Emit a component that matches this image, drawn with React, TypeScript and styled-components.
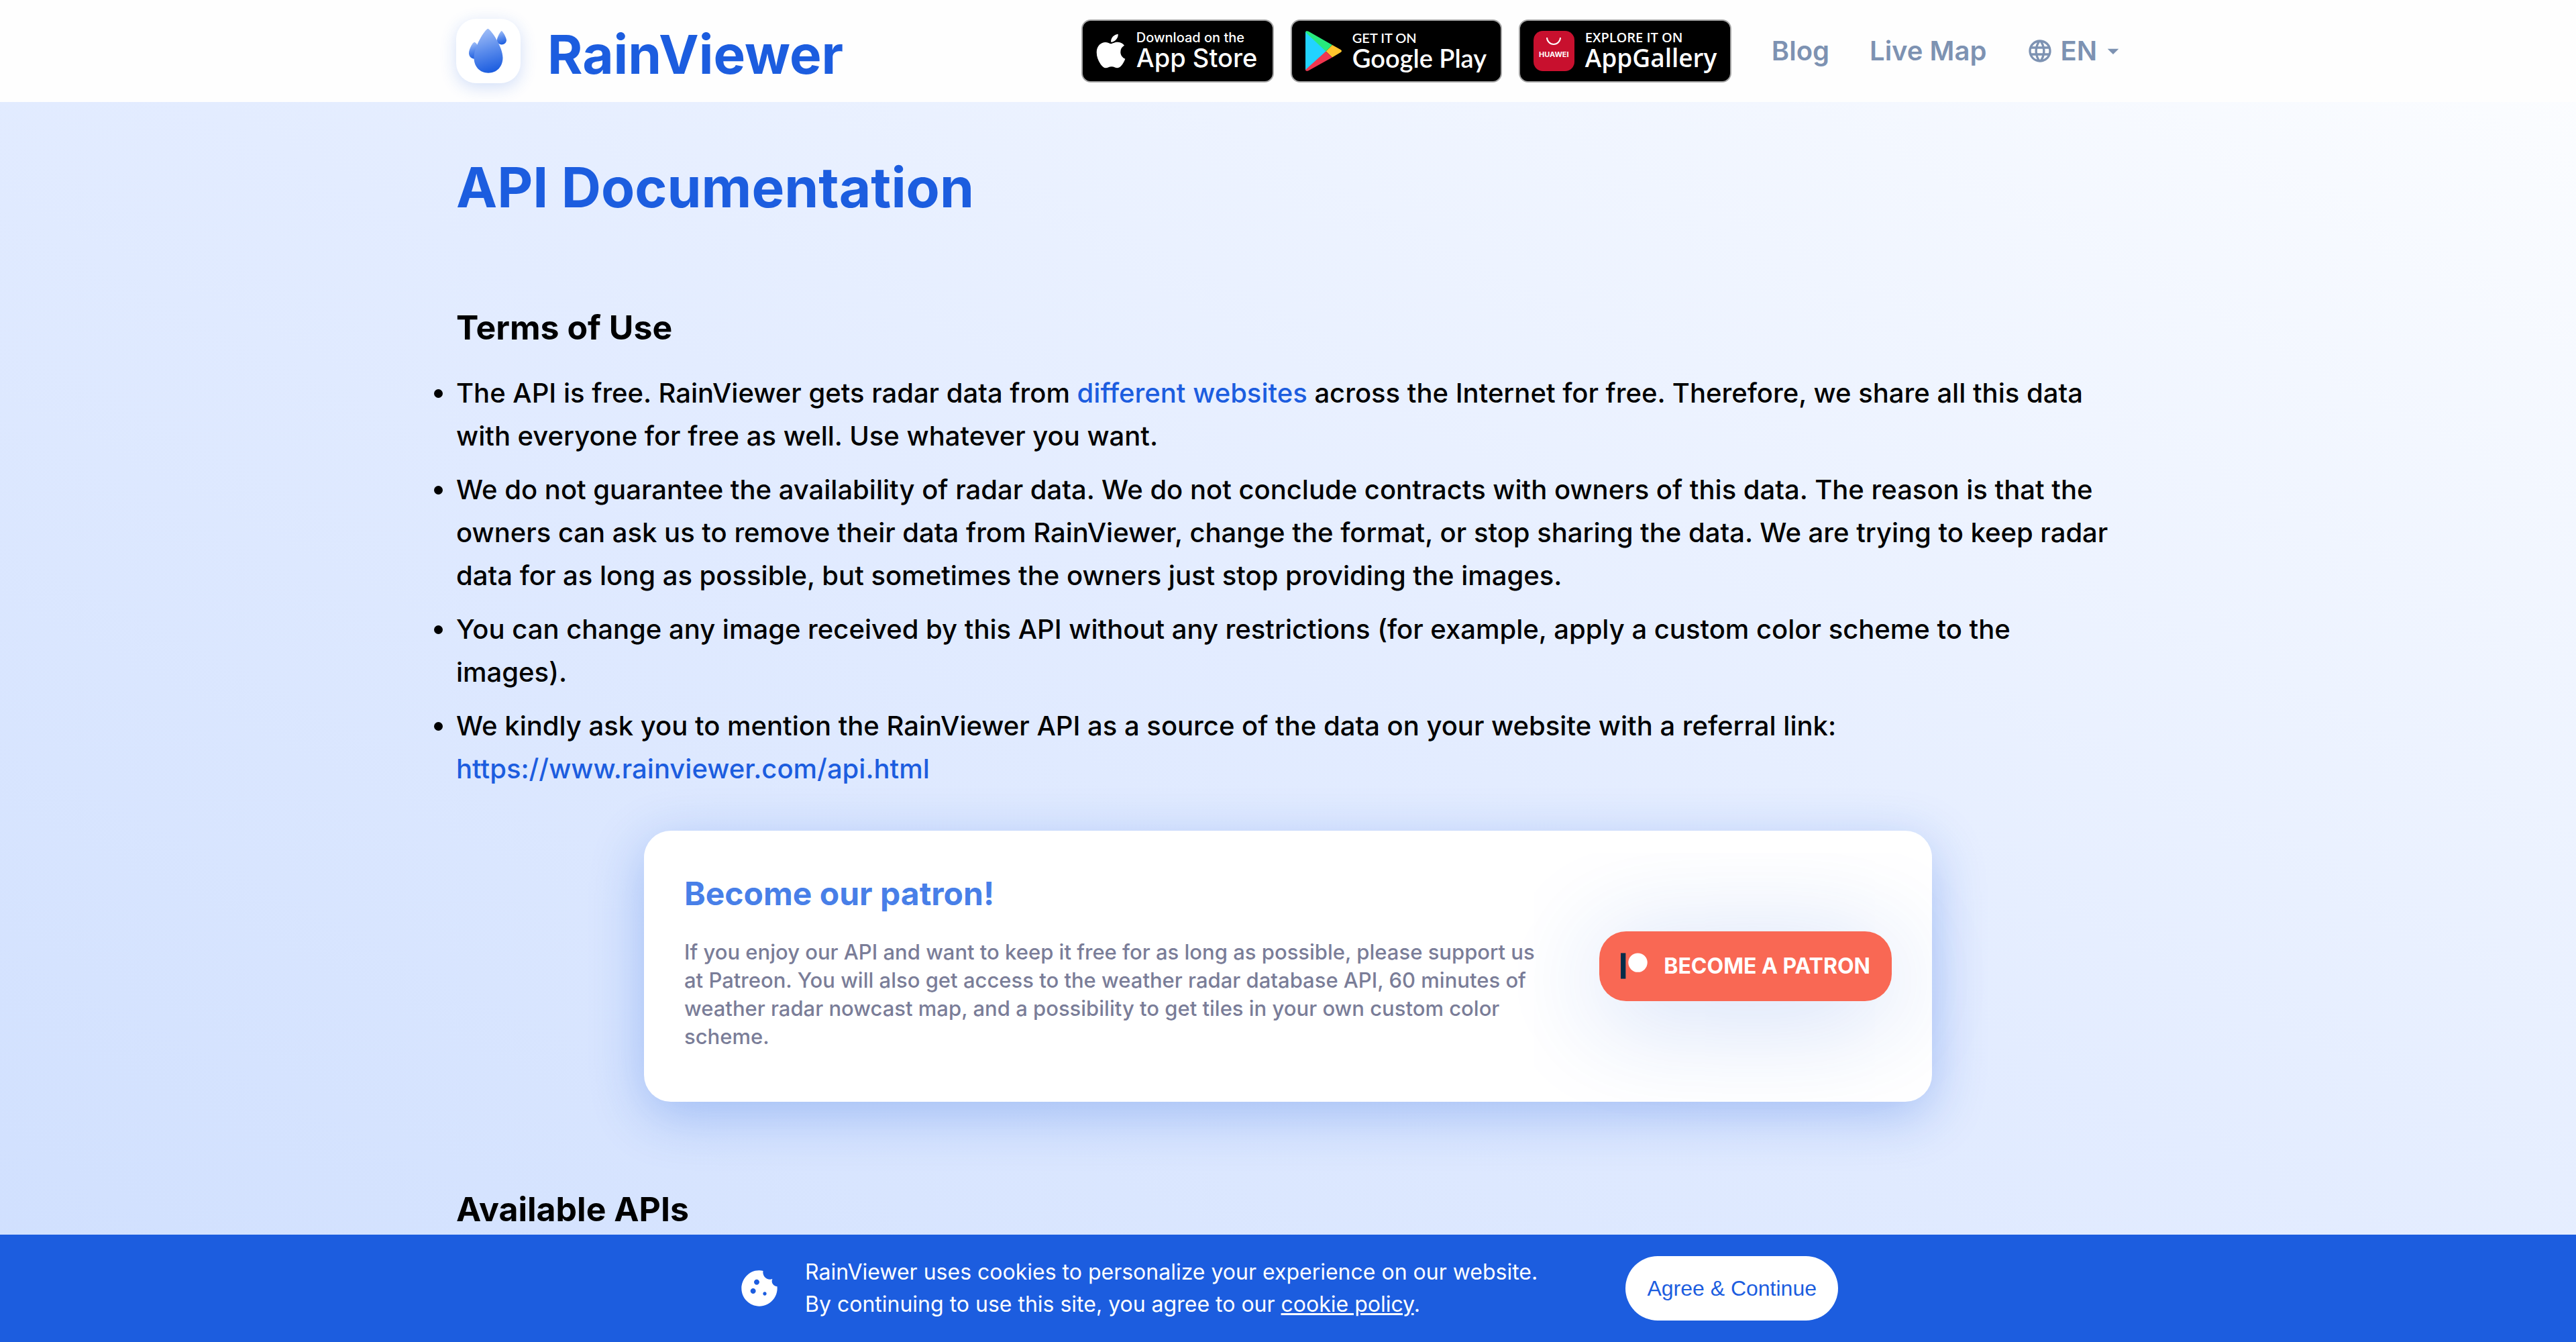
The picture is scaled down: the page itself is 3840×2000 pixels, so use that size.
import React from "react";
import styled, { createGlobalStyle } from "styled-components";
import { FaApple } from "react-icons/fa";
import { MdCookie, MdLanguage, MdArrowDropDown } from "react-icons/md";

const blue = "#1c5ddf";
const slate = "#7d92b2";
const sans = `Inter, "Liberation Sans", sans-serif`;

const Global = createGlobalStyle`
  *, *::before, *::after { box-sizing: border-box; }
  html, body { margin: 0; }
  body {
    min-height: 100vh;
    font: 500 40px/64px ${sans};
    color: #000;
    background: linear-gradient(to top right, #cfdffe 0%, #e3ecff 50%, #fdfeff 100%) fixed;
  }
  h1, h2, h3, p, ul { margin: 0; padding: 0; }
  a { color: ${blue}; text-decoration: none; }
  button { cursor: pointer; }
`;

const Page = styled.div`
  height: 100vh;
  overflow: hidden;
  display: flex;
  flex-direction: column;
`;

const Header = styled.header`
  background: #fefefe;
  flex: none;
`;

const Container = styled.div`
  width: 100%;
  max-width: 2560px;
  margin: 0 auto;
  padding: 0 40px;
`;

const HeaderRow = styled(Container)`
  height: 152px;
  display: flex;
  align-items: center;
  justify-content: space-between;
`;

const Brand = styled.a`
  height: 96px;
  display: flex;
  align-items: flex-start;
  gap: 40px;
`;

const BrandName = styled.span`
  font-size: 80px;
  line-height: 106px;
  font-weight: 700;
`;

const LogoTile = styled.span`
  width: 96px;
  height: 96px;
  border-radius: 30px;
  background: #fff;
  box-shadow: 0 6px 24px rgba(28, 93, 223, 0.2);
  svg { display: block; }
`;

const Nav = styled.nav`
  display: flex;
  align-items: center;
  gap: 60px;
`;

const Badges = styled.div`
  display: flex;
  align-items: center;
  gap: 25px;
`;

const Badge = styled.a<{ $width: number; $family: string; $weight: number }>`
  width: ${(p) => p.$width}px;
  height: 94px;
  padding: 0 20px;
  display: flex;
  align-items: center;
  gap: 16px;
  border: 2px solid #a6a6a6;
  border-radius: 14px;
  background: #000;
  color: #fff;
  font-family: ${(p) => p.$family};
  font-weight: ${(p) => p.$weight};
  white-space: nowrap;
  svg { flex: none; }
`;

const AppleLogo = styled(FaApple)`
  width: 44px;
  height: 58px;
`;

const BadgeText = styled.span`
  display: flex;
  flex-direction: column;
`;

const Small = styled.span`
  font-size: 20px;
  line-height: 20px;
`;

const Large = styled.span<{ $size: number }>`
  font-size: ${(p) => p.$size}px;
  line-height: 40px;
`;

const HuaweiIcon = styled.span`
  width: 61px;
  height: 60px;
  display: flex;
  flex: none;
  flex-direction: column;
  align-items: center;
  gap: 4px;
  padding-top: 9px;
  border-radius: 14px;
  background: #c8102e;
  font: 700 11px/20px ${sans};
`;

const NavLink = styled.a`
  color: ${slate};
  font-weight: 600;
`;

const LangButton = styled.button`
  display: flex;
  align-items: center;
  border: 0;
  padding: 0;
  margin-right: -10px;
  background: none;
  font: inherit;
  font-weight: 600;
  color: ${slate};
`;

const LangCode = styled.span`
  padding: 0 4px 0 10px;
`;

const Main = styled(Container)`
  flex: 1;
`;

const Title = styled.h1`
  padding-top: 80px;
  font-size: 82px;
  line-height: 96px;
  font-weight: 700;
  color: ${blue};
`;

const Heading = styled.h2`
  padding-top: 128px;
  font-size: 50px;
  line-height: 64px;
  font-weight: 700;
`;

const List = styled.ul`
  padding-top: 34px;
  display: flex;
  flex-direction: column;
  gap: 16px;
`;

const Patron = styled.section`
  max-width: 1920px;
  margin: 60px auto 0;
  padding: 60px;
  display: flex;
  align-items: center;
  gap: 80px;
  border-radius: 40px;
  background: #fff;
  box-shadow: 0 20px 80px rgba(28, 93, 223, 0.3);
`;

const PatronTitle = styled.h3`
  font-size: 48px;
  line-height: 68px;
  font-weight: 700;
  color: #487fe8;
`;

const PatronText = styled.p`
  padding: 32px 0 16px;
  font-size: 31px;
  line-height: 42px;
  color: #7a7d98;
`;

const PatronButton = styled.button`
  flex: none;
  width: 436px;
  height: 104px;
  padding: 0 32px;
  display: flex;
  align-items: center;
  gap: 24px;
  border: 0;
  border-radius: 40px;
  background: #f96854;
  box-shadow: 0 20px 160px rgba(28, 93, 223, 0.24);
  color: #fff;
  font: 700 32px/40px ${sans};
  white-space: nowrap;
`;

const CookieBar = styled.footer`
  height: 160px;
  flex: none;
  display: flex;
  justify-content: center;
  background: ${blue};
  color: #fff;
`;

const CookieRow = styled.div`
  width: 100%;
  max-width: 1640px;
  display: flex;
  align-items: center;
  gap: 36px;
`;

const CookieText = styled.p`
  flex: 1;
  font-size: 32px;
  line-height: 48px;
  font-weight: 400;
  a { color: #fff; text-decoration: underline; }
`;

const Agree = styled.button`
  height: 96px;
  padding: 0 32px;
  border: 0;
  border-radius: 48px;
  background: #fff;
  color: ${blue};
  font: 400 32px/40px "Liberation Sans", sans-serif;
`;

const RainLogo = () => (
  <svg width="96" height="96" viewBox="0 0 96 96" aria-hidden="true">
    <defs>
      <linearGradient id="drop" x1="0.3" y1="0" x2="0.5" y2="1">
        <stop offset="0" stopColor="#a3c0f8" />
        <stop offset="0.5" stopColor="#5b8cec" />
        <stop offset="1" stopColor="#1c5ddf" />
      </linearGradient>
    </defs>
    <path fill="url(#drop)" d="M67.7 18c1.5 0 7.3 10 7.3 14.500a7.200 6.800 0 0 1-14.300 0C60.700 28 66.200 18 67.700 18Z" />
    <path fill="url(#drop)" d="M27.300 34.700c2 0 8.700 9.500 8.700 16.300 0 5-3.500 8.700-8.500 8.700S19 56 19 51c0-6.800 6.300-16.300 8.300-16.300Z" />
    <path fill="url(#drop)" d="M47.300 14.700c4.500 1 22.200 27 22.200 43.300 0 13.500-9 22.700-21.500 22.700S26.500 71.500 26.500 58c0-16.300 16.300-42.300 20.800-43.300Z" />
  </svg>
);

const PlayLogo = () => (
  <svg width="54" height="60" viewBox="0 0 54 60" aria-hidden="true">
    <path fill="#22d3ff" d="M0 2 2 .5 31 30.500 2 59.500 0 58Z" />
    <path fill="#27ea7c" d="M0 2C.5 0 2.500-.5 5 1L40 21 30.500 30.500Z" />
    <path fill="#ffc42c" d="M40 21l12.500 7c2 1.200 2 2.800 0 4L40 39.500l-9.500-9Z" />
    <path fill="#f0364f" d="M30.500 30.500l9.500 9L5 59c-2.500 1.500-4.500 1-5-1Z" />
  </svg>
);

const PatreonLogo = () => (
  <svg width="41" height="40" viewBox="0 0 41 40" aria-hidden="true">
    <rect width="7.500" height="39" fill="#052d49" />
    <circle cx="26" cy="14.500" r="14.500" fill="#fff" />
  </svg>
);

export default function App() {
  return (
    <Page>
      <Global />
      <Header>
        <HeaderRow>
          <Brand href="#">
            <LogoTile><RainLogo /></LogoTile>
            <BrandName>RainViewer</BrandName>
          </Brand>
          <Nav>
            <Badges>
              <Badge href="#" $width={287} $family={sans} $weight={500}>
                <AppleLogo />
                <BadgeText><Small>Download on the</Small><Large $size={38}>App Store</Large></BadgeText>
              </Badge>
              <Badge href="#" $width={315} $family="Lato, sans-serif" $weight={600}>
                <PlayLogo />
                <BadgeText><Small>GET IT ON</Small><Large $size={38}>Google Play</Large></BadgeText>
              </Badge>
              <Badge href="#" $width={317} $family={`"Open Sans", sans-serif`} $weight={600}>
                <HuaweiIcon>
                  <svg width="22" height="12" viewBox="0 0 22 12" fill="none" stroke="#fff" strokeWidth="2" aria-hidden="true">
                    <path d="M1 1a10 10 0 0 0 20 0" />
                  </svg>
                  HUAWEI
                </HuaweiIcon>
                <BadgeText><Small>EXPLORE IT ON</Small><Large $size={37}>AppGallery</Large></BadgeText>
              </Badge>
            </Badges>
            <NavLink href="#">Blog</NavLink>
            <NavLink href="#">Live Map</NavLink>
            <LangButton>
              <MdLanguage size={40} />
              <LangCode>EN</LangCode>
              <MdArrowDropDown size={40} />
            </LangButton>
          </Nav>
        </HeaderRow>
      </Header>
      <Main as="main">
        <Title>API Documentation</Title>
        <Heading>Terms of Use</Heading>
        <List>
          <li>The API is free. RainViewer gets radar data from <a href="#">different websites</a> across the Internet for free. Therefore, we share all this data with everyone for free as well. Use whatever you want.</li>
          <li>We do not guarantee the availability of radar data. We do not conclude contracts with owners of this data. The reason is that the owners can ask us to remove their data from RainViewer, change the format, or stop sharing the data. We are trying to keep radar data for as long as possible, but sometimes the owners just stop providing the images.</li>
          <li>You can change any image received by this API without any restrictions (for example, apply a custom color scheme to the images).</li>
          <li>We kindly ask you to mention the RainViewer API as a source of the data on your website with a referral link: <a href="#">https://www.rainviewer.com/api.html</a></li>
        </List>
        <Patron>
          <div>
            <PatronTitle>Become our patron!</PatronTitle>
            <PatronText>If you enjoy our API and want to keep it free for as long as possible, please support us at Patreon. You will also get access to the weather radar database API, 60 minutes of weather radar nowcast map, and a possibility to get tiles in your own custom color scheme.</PatronText>
          </div>
          <PatronButton><PatreonLogo />BECOME A PATRON</PatronButton>
        </Patron>
        <Heading>Available APIs</Heading>
      </Main>
      <CookieBar>
        <CookieRow>
          <MdCookie size={64} />
          <CookieText>RainViewer uses cookies to personalize your experience on our website.<br />By continuing to use this site, you agree to our <a href="#">cookie policy</a>.</CookieText>
          <Agree>Agree &amp; Continue</Agree>
        </CookieRow>
      </CookieBar>
    </Page>
  );
}
